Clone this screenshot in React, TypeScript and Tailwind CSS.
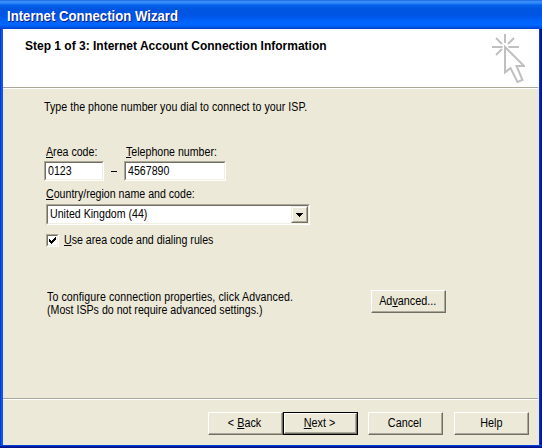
import type { ReactNode } from "react";

function Key({ children }: { children: ReactNode }) {
  return <span className="underline underline-offset-1 decoration-1 [text-decoration-skip-ink:none]">{children}</span>;
}

function Label({ className = "", children }: { className?: string; children: ReactNode }) {
  return (
    <div className={`whitespace-nowrap ${className}`}>
      <div className="origin-left scale-x-[0.885]">{children}</div>
    </div>
  );
}

function Button({ primary = false, className = "", children }: { primary?: boolean; className?: string; children: ReactNode }) {
  const edge = primary ? "border border-black" : "";
  return (
    <button className={`block h-[23px] w-[75px] shrink-0 ${edge} ${className}`}>
      <span className="block h-full border border-t-white border-l-white border-r-[#716f64] border-b-[#716f64]">
        <span className="flex h-full items-center justify-center border-r border-b border-[#aca899] whitespace-nowrap">
          <span className="block scale-x-[0.9]">{children}</span>
        </span>
      </span>
    </button>
  );
}

function Sunken({ className = "", children }: { className?: string; children: ReactNode }) {
  return (
    <div className={`border border-t-[#aca899] border-l-[#aca899] border-r-white border-b-white ${className}`}>
      <div className="flex h-full items-center border border-t-[#716f64] border-l-[#716f64] border-r-[#f1efe2] border-b-[#f1efe2] bg-white whitespace-nowrap">
        {children}
      </div>
    </div>
  );
}

function Divider() {
  return <div className="mr-px h-[2px] shrink-0 border-t border-[#aca899] bg-white" />;
}

export default function App() {
  return (
    <div className="flex h-[448px] w-[542px] flex-col overflow-hidden bg-[#004fe3] font-['Liberation_Sans',Arial,sans-serif] text-[12px] leading-[13px] text-black">
      <header className="flex h-[29px] shrink-0 items-center bg-[linear-gradient(180deg,#0b50c8_0,#3c90ff_1px,#3188f8_3px,#0663ec_5px,#0055df_9px,#0055e6_16px,#0063fc_21px,#0066ff_25px,#0058e8_27px,#003dd0_29px)] pt-[3px] pl-[7px]">
        <div className="origin-left scale-x-[0.94] text-[14px] font-bold whitespace-nowrap text-white [text-shadow:1px_1px_0_#0a1883]">
          Internet Connection Wizard
        </div>
      </header>
      <div className="flex min-h-0 flex-1 border-b border-[#0042d8]">
        <div className="w-px bg-[#0036d5]" />
        <div className="w-[2px] bg-[#0859e8]" />
        <main className="flex w-[536px] flex-col bg-[#ece9d8]">
          <section className="flex h-[58px] shrink-0 justify-between bg-white pr-[14px] pl-[22px]">
            <div className="pt-[11px] font-bold whitespace-nowrap">Step 1 of 3: Internet Account Connection Information</div>
            <svg width="34" height="50" viewBox="491 33 34 50" className="mt-[4px] shrink-0" fill="none" stroke="#c0c0c0" strokeWidth="2">
              <path d="M505 34v9M492 47h10.500M508.500 47h10.500M496 38l6 6M514 38l-6 6M496 55l6-6" />
              <path d="M505 47v25.500l5.500-4.500 7 14 5-2-6-14h7.500z" />
            </svg>
          </section>
          <Divider />
          <section className="flex h-[309px] shrink-0 flex-col pl-[41px]">
            <Label className="mt-[12px] tracking-[0.05px]">Type the phone number you dial to connect to your ISP.</Label>
            <div className="mt-[32px] flex">
              <Label className="w-[80px] pl-[2px]"><Key>A</Key>rea code:</Label>
              <Label className="pl-[2px]"><Key>T</Key>elephone number:</Label>
            </div>
            <div className="mt-[2px] flex items-center">
              <Sunken className="h-[20px] w-[60px]"><Label className="pl-[2px]">0123</Label></Sunken>
              <div className="mx-[7px] h-px w-[6px] bg-black" />
              <Sunken className="h-[20px] w-[102px]"><Label className="pl-[2px]">4567890</Label></Sunken>
            </div>
            <Label className="mt-[7px] pl-[2px]"><Key>C</Key>ountry/region name and code:</Label>
            <Sunken className="mt-[3px] ml-[2px] h-[21px] w-[264px]">
              <Label className="flex-1 pl-[2px]">United Kingdom (44)</Label>
              <div className="h-[17px] w-[17px] border border-t-[#f1efe2] border-l-[#f1efe2] border-r-[#716f64] border-b-[#716f64] bg-[#ece9d8]">
                <div className="flex h-full items-center justify-center border border-t-white border-l-white border-r-[#aca899] border-b-[#aca899]">
                  <svg width="7" height="4" shapeRendering="crispEdges"><path d="M0 0h7v1h-1v1h-1v1h-1v1h-1v-1h-1v-1h-1v-1h-1z" /></svg>
                </div>
              </div>
            </Sunken>
            <div className="mt-[9px] ml-[2px] flex items-center">
              <Sunken className="h-[13px] w-[13px]">
                <svg width="9" height="9" shapeRendering="crispEdges"><path d="M1 3h1v1h1v1h1v-1h1v-1h1v-1h1v-1h1v3h-1v1h-1v1h-1v1h-1v1h-1v-1h-1v-1h-1z" /></svg>
              </Sunken>
              <Label className="ml-[5px]"><Key>U</Key>se area code and dialing rules</Label>
            </div>
            <div className="mt-[43px] flex pl-[3px]">
              <div className="w-[324px] shrink-0 pt-px">
                <Label className="tracking-[0.1px]">To configure connection properties, click Advanced.</Label>
                <Label>(Most ISPs do not require advanced settings.)</Label>
              </div>
              <Button>Ad<Key>v</Key>anced...</Button>
            </div>
          </section>
          <Divider />
          <footer className="flex pt-[12px] pl-[205px]">
            <Button>&lt; <Key>B</Key>ack</Button>
            <Button primary><Key>N</Key>ext &gt;</Button>
            <Button className="ml-[10px]">Cancel</Button>
            <Button className="ml-[11px]">Help</Button>
          </footer>
        </main>
        <div className="w-px bg-[#0037d8]" />
        <div className="w-px bg-[#0020ab]" />
        <div className="w-px bg-[#00138c]" />
      </div>
      <div className="h-[2px] shrink-0 border-b border-[#00138c] bg-[#001ea0]" />
    </div>
  );
}
